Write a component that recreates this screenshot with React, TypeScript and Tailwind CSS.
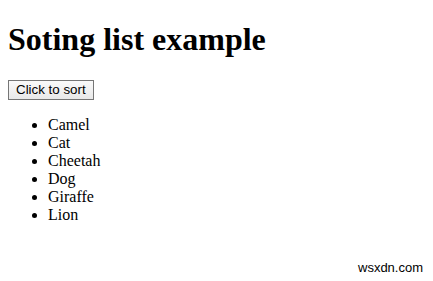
import React, { useState } from "react";

export default function App() {
  const [items, setItems] = useState(["Camel", "Cat", "Cheetah", "Dog", "Giraffe", "Lion"]);
  return (
    <div className="relative h-[281px] w-[433px] bg-white text-black" style={{ fontFamily: '"Liberation Serif", "Times New Roman", serif' }}>
      <div className="px-2 pt-[21px] text-[16px] leading-[18px]">
        <h1 className="mb-[21px] text-[32px] font-bold leading-[37px]">Soting list example</h1>
        <div className="leading-[20px]">
          <button
            onClick={() => setItems([...items].sort())}
            className="text-[13.33px] leading-[15px] text-black"
            style={{ fontFamily: '"Liberation Sans", Arial, sans-serif', border: "1px solid #767676", borderRadius: 0, padding: "1px 7px 2px", background: "linear-gradient(#fafafa,#e8e8e8)" }}
          >
            Click to sort
          </button>
        </div>
        <ul className="mt-[16px] mb-4 list-disc pl-10">
          {items.map((i) => (
            <li key={i}>{i}</li>
          ))}
        </ul>
      </div>
      <div className="absolute left-[358px] top-[260px] text-[13px] leading-[15px]" style={{ fontFamily: '"Liberation Sans", Arial, sans-serif' }}>
        wsxdn.com
      </div>
    </div>
  );
}
